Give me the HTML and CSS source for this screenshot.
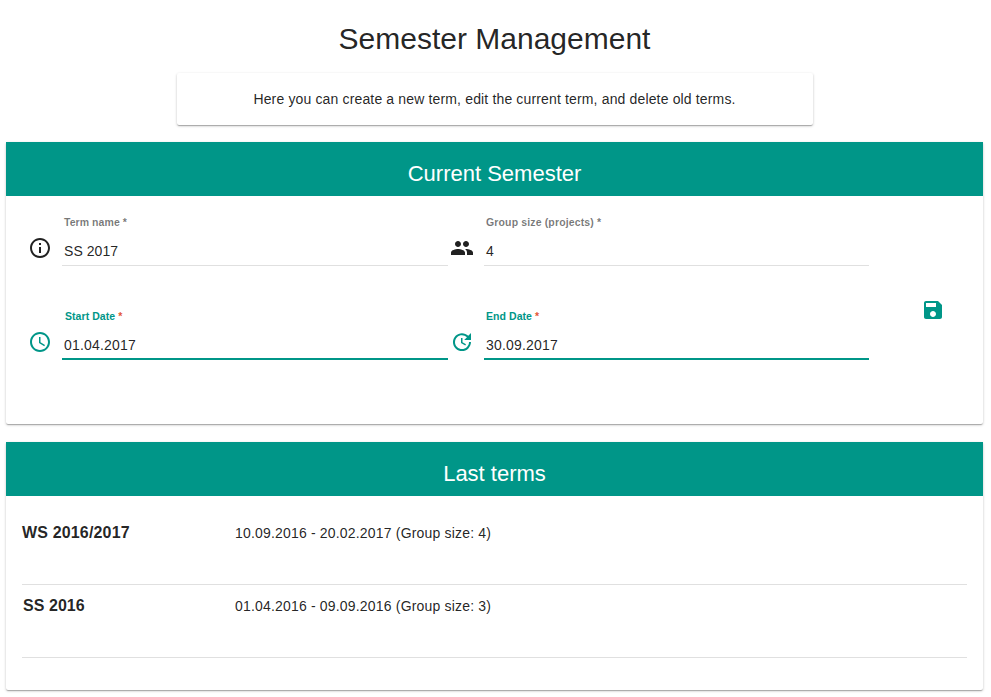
FILE: index.html
```html
<!DOCTYPE html>
<html lang="en">
<head>
<meta charset="utf-8">
<title>Semester Management</title>
<link rel="stylesheet" href="styles.css">
</head>
<body>
<h1>Semester Management</h1>
<p class="card intro"><span>Here you can create a new term, edit the current term, and delete old terms.</span></p>
<section class="card current">
  <h2>Current Semester</h2>
  <form class="form">
    <div class="fields">
      <div class="field">
        <svg class="icon" viewBox="0 0 24 24"><path d="M11 17h2v-6h-2v6zm1-15C6.480 2 2 6.480 2 12s4.480 10 10 10 10-4.480 10-10S17.520 2 12 2zm0 18c-4.410 0-8-3.590-8-8s3.590-8 8-8 8 3.590 8 8-3.590 8-8 8zM11 9h2V7h-2v2z"/></svg>
        <div class="input"><label>Term name *</label><span class="value v-term">SS 2017</span></div>
      </div>
      <div class="field">
        <svg class="icon" viewBox="0 0 24 24"><path d="M16 11c1.660 0 2.990-1.340 2.990-3S17.660 5 16 5c-1.660 0-3 1.340-3 3s1.340 3 3 3zm-8 0c1.660 0 2.990-1.340 2.990-3S9.660 5 8 5C6.340 5 5 6.340 5 8s1.340 3 3 3zm0 2c-2.330 0-7 1.170-7 3.500V19h14v-2.500c0-2.330-4.670-3.500-7-3.500zm8 0c-.290 0-.620.020-.970.050 1.160.840 1.970 1.970 1.970 3.450V19h6v-2.500c0-2.330-4.670-3.500-7-3.500z"/></svg>
        <div class="input"><label class="l-group">Group size (projects) *</label><span class="value">4</span></div>
      </div>
      <div class="field active">
        <svg class="icon" viewBox="0 0 24 24"><path d="M11.990 2C6.470 2 2 6.480 2 12s4.470 10 9.990 10C17.520 22 22 17.520 22 12S17.520 2 11.990 2zM12 20c-4.420 0-8-3.580-8-8s3.580-8 8-8 8 3.580 8 8-3.580 8-8 8zm.500-13H11v6l5.250 3.150.750-1.230-4.500-2.670z"/></svg>
        <div class="input"><label class="l-start">Start Date <i>*</i></label><span class="value">01.04.2017</span></div>
      </div>
      <div class="field active">
        <svg class="icon" viewBox="0 0 24 24"><path d="M21 10.120h-6.780l2.740-2.820c-2.730-2.700-7.150-2.800-9.880-.100-2.730 2.710-2.730 7.080 0 9.790 2.730 2.710 7.150 2.710 9.880 0C18.320 15.650 19 14.080 19 12.100h2c0 1.980-.880 4.550-2.640 6.290-3.510 3.480-9.210 3.480-12.720 0-3.500-3.470-3.530-9.110-.020-12.580 3.510-3.470 9.140-3.470 12.650 0L21 3v7.120zM12.500 8v4.250l3.500 2.080-.720 1.210L11 13V8h1.500z"/></svg>
        <div class="input"><label>End Date <i>*</i></label><span class="value">30.09.2017</span></div>
      </div>
    </div>
    <svg class="icon save" viewBox="0 0 24 24"><path d="M17 3H5c-1.110 0-2 .900-2 2v14c0 1.100.890 2 2 2h14c1.100 0 2-.900 2-2V7l-4-4zm-5 16c-1.660 0-3-1.340-3-3s1.340-3 3-3 3 1.340 3 3-1.340 3-3 3zm3-10H5V5h10v4z"/></svg>
  </form>
</section>
<section class="card past">
  <h2>Last terms</h2>
  <div class="terms">
    <div class="term"><strong>WS 2016/2017</strong><span>10.09.2016 - 20.02.2017 (Group size: 4)</span></div>
    <div class="term"><strong class="nudge">SS 2016</strong><span>01.04.2016 - 09.09.2016 (Group size: 3)</span></div>
  </div>
</section>
</body>
</html>
```
FILE: styles.css
```css
* { box-sizing: border-box; }
body {
  margin: 0;
  padding: 20px 8px 0 6px;
  height: 697px;
  overflow: hidden;
  background: #fff;
  color: rgba(0, 0, 0, 0.87);
  font-family: "Liberation Sans", Arial, sans-serif;
  font-size: 14px;
}
h1 {
  margin: 0 0 15px;
  font-size: 30px;
  font-weight: 400;
  line-height: 38px;
  text-align: center;
}
.card {
  border-radius: 2px;
  box-shadow: 0 1px 3px rgba(0, 0, 0, 0.2), 0 1px 1px rgba(0, 0, 0, 0.14), 0 2px 1px -1px rgba(0, 0, 0, 0.12);
}
.intro {
  width: 636px;
  height: 52px;
  margin: 0 auto 17px;
  line-height: 52px;
  text-align: center;
  letter-spacing: 0.15px;
}
h2 {
  height: 54px;
  margin: 0;
  padding-top: 5px;
  background: #009688;
  color: #fff;
  font-size: 22px;
  font-weight: 400;
  line-height: 54px;
  text-align: center;
}
.current { height: 282px; margin-bottom: 18px; }
.past { height: 248px; }
.form { display: flex; padding: 16px 16px 0; }
.fields {
  display: grid;
  grid-template-columns: 420px 419px;
  column-gap: 2px;
  grid-auto-rows: 94px;
  width: 843px;
  padding-left: 6px;
}
.field { display: flex; align-items: flex-start; gap: 10px; padding-right: 0; }
.icon { flex: none; width: 24px; height: 24px; fill: currentColor; }
.field .icon { margin-top: 24px; }
.input {
  display: flex;
  flex-direction: column;
  flex: 1;
  height: 54px;
  padding: 4px 2px 0;
  border-bottom: 1px solid #e0e0e0;
}
label {
  height: 13px;
  color: rgba(0, 0, 0, 0.54);
  font-size: 10.5px;
  font-weight: 700;
  line-height: 13px;
  letter-spacing: 0.06px;
}
.l-group { letter-spacing: 0.14px; }
.l-start { padding-left: 1px; }
.value { margin-top: 12px; line-height: 20px; letter-spacing: 0.2px; }
.v-term { letter-spacing: 0.05px; }
.active .icon { color: #009688; }
.active .input { border-bottom: 2px solid #009688; }
.active label { color: #009688; }
label i { color: #dd2c00; font-style: normal; opacity: 0.8; }
.save { margin: 86px 0 0 56px; color: #009688; }
.terms { padding: 16px; }
.term {
  display: grid;
  grid-template-columns: 213px 1fr;
  height: 73px;
  padding-top: 11px;
  border-bottom: 1px solid #e0e0e0;
  line-height: 20px;
}
.term strong { font-size: 16px; letter-spacing: 0.16px; }
.term .nudge { padding-left: 1px; letter-spacing: 0.05px; }
.term span { letter-spacing: 0.18px; }
```
